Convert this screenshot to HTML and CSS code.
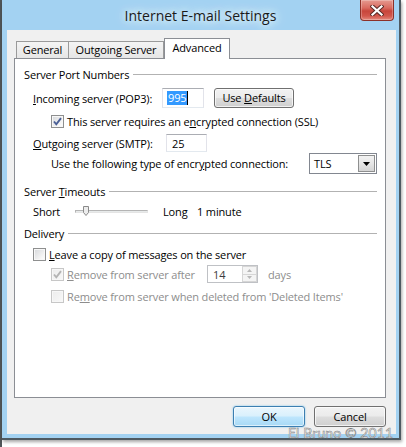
FILE: index.html
```html
<!DOCTYPE html>
<html>
<head>
<meta charset="utf-8">
<link rel="stylesheet" href="styles.css">
</head>
<body>
<div class="window">
  <div class="titlebar">
    <div class="tb-side"></div>
    <div class="title">Internet E-mail Settings</div>
    <div class="tb-side tb-right">
      <div class="close">
        <svg width="14" height="11" viewBox="0 0 14 11">
          <path d="M2.5 1.5 L11.5 9.5 M11.5 1.5 L2.5 9.5" stroke="#5a2a26" stroke-width="4.2" stroke-linecap="square" fill="none"/>
          <path d="M2.5 1.5 L11.5 9.5 M11.5 1.5 L2.5 9.5" stroke="#ffffff" stroke-width="2.2" stroke-linecap="square" fill="none"/>
        </svg>
      </div>
    </div>
  </div>
  <div class="client">
    <div class="tabs">
      <div class="tab tab-general">General</div>
      <div class="tab tab-outgoing">Outgoing Server</div>
      <div class="tab tab-advanced">Advanced</div>
    </div>
    <div class="panel">
      <div class="group-head gh-first"><span>Server Port Numbers</span><i class="rule"></i></div>

      <div class="row row-in">
        <span class="lbl lbl-in"><u>I</u>ncoming server (POP3):</span>
        <span class="textbox tb-in"><span class="sel">995</span><span class="caret"></span></span>
        <span class="btn btn-def"><span>Use <u>D</u>efaults</span></span>
      </div>

      <div class="row row-ssl">
        <span class="check checked">
          <svg width="11" height="11" viewBox="0 0 11 11"><path d="M2 5.5 L4.3 8.3 L9 2.2" stroke="#4a5f96" stroke-width="1.9" fill="none"/></svg>
        </span>
        <span class="clabel">This server requires an e<u>n</u>crypted connection (SSL)</span>
      </div>

      <div class="row row-out">
        <span class="lbl lbl-out"><u>O</u>utgoing server (SMTP):</span>
        <span class="textbox tb-out">25</span>
      </div>

      <div class="row row-enc">
        <span class="lbl lbl-enc">Use the following type of encr<u>y</u>pted connection:</span>
        <span class="select">
          <span class="sel-text">TLS</span>
          <span class="sel-btn"><svg width="7" height="4" viewBox="0 0 7 4"><path d="M0 0 H7 L3.5 4 Z" fill="#000"/></svg></span>
        </span>
      </div>

      <div class="group-head gh-timeouts"><span>Server <u>T</u>imeouts</span><i class="rule"></i></div>

      <div class="row row-slider">
        <span class="lbl lbl-short">Short</span>
        <span class="slider">
          <span class="track"></span>
          <svg class="thumb" width="6" height="10" viewBox="0 0 6 10"><path d="M0.5 0.5 H5.5 V6.5 L3 9.5 L0.5 6.5 Z" fill="#ececec" stroke="#8a8a8a"/></svg>
        </span>
        <span class="lbl lbl-long">Long</span>
        <span class="lbl">1 minute</span>
      </div>

      <div class="group-head gh-delivery"><span>Delivery</span><i class="rule"></i></div>

      <div class="row row-leave">
        <span class="check"></span>
        <span class="clabel"><u>L</u>eave a copy of messages on the server</span>
      </div>

      <div class="row row-after">
        <span class="check checked disabled">
          <svg width="11" height="11" viewBox="0 0 11 11"><path d="M2 5.5 L4.3 8.3 L9 2.2" stroke="#b4b4b4" stroke-width="1.9" fill="none"/></svg>
        </span>
        <span class="clabel dis lbl-after"><u>R</u>emove from server after</span>
        <span class="spin">
          <span class="spin-text">14</span>
          <span class="spin-btns">
            <span class="spin-b"><svg width="5" height="3" viewBox="0 0 5 3"><path d="M0 3 H5 L2.5 0 Z" fill="#b8b8b8"/></svg></span>
            <span class="spin-b"><svg width="5" height="3" viewBox="0 0 5 3"><path d="M0 0 H5 L2.5 3 Z" fill="#b8b8b8"/></svg></span>
          </span>
        </span>
        <span class="dis days">days</span>
      </div>

      <div class="row row-deleted">
        <span class="check disabled"></span>
        <span class="clabel dis">Re<u>m</u>ove from server when deleted from 'Deleted Items'</span>
      </div>
    </div>
    <div class="buttons">
      <span class="btn btn-ok">OK</span>
      <span class="btn btn-cancel">Cancel</span>
    </div>
  </div>
</div>
<div class="watermark">El Bruno © 2011</div>
</body>
</html>
```
FILE: styles.css
```css
html, body {
  margin: 0;
  padding: 0;
}
body {
  width: 406px;
  height: 447px;
  overflow: hidden;
  position: relative;
  background: linear-gradient(to right, #505558 0 2px, #ffffff 2px);
  font-family: "Open Sans", "Noto Sans", sans-serif;
  font-size: 11px;
  letter-spacing: -0.15px;
  color: #000;
}
u { text-decoration: underline; text-underline-offset: 1px; }

.window {
  margin-left: 2px;
  width: 397px;
  height: 438px;
  background: #a3d2f2;
  border-right: 2px solid #4e5a62;
  border-bottom: 2px solid #4e5a62;
  box-shadow: 1px 2px 3px rgba(0,0,0,0.35);
  display: flex;
  flex-direction: column;
}

.titlebar {
  height: 30px;
  display: grid;
  grid-template-columns: 1fr auto 1fr;
  align-items: start;
}
.title {
  font-size: 14px;
  letter-spacing: 0;
  color: #1a1a1a;
  line-height: 16px;
  padding-top: 8px;
  text-shadow: 0 0 6px #e6f4fd, 0 0 10px #e6f4fd, 0 0 14px #d8eefc;
}
.tb-right {
  display: flex;
  justify-content: flex-end;
  padding-right: 5px;
}
.close {
  width: 32px;
  height: 20px;
  border: 1px solid #8c3129;
  border-top: none;
  border-radius: 0 0 4px 4px;
  background: linear-gradient(to bottom, #e59a90 0%, #d96a5f 40%, #c8453b 55%, #d2574c 80%, #e48a7e 100%);
  box-shadow: inset 0 0 0 1px rgba(255,255,255,0.25);
  display: flex;
  align-items: center;
  justify-content: center;
}

.client {
  margin: 0 3px 4px 5px;
  height: 404px;
  background: #f0f0f0;
  padding: 8px 10px 7px 7px;
  box-sizing: border-box;
  display: flex;
  flex-direction: column;
}

.tabs {
  height: 20px;
  margin-left: 2px;
  display: flex;
  align-items: flex-end;
}
.tab {
  box-sizing: border-box;
  height: 17px;
  border: 1px solid #9a9a9a;
  border-bottom: none;
  background: linear-gradient(to bottom, #f4f4f4, #e6e6e6);
  display: flex;
  align-items: center;
  justify-content: center;
  line-height: 14px;
}
.tab-general { width: 53px; }
.tab-outgoing { width: 95px; border-left: none; }
.tab-advanced {
  width: 66px;
  height: 21px;
  margin-bottom: -1px;
  background: #fff;
  border-color: #8b8e94;
  z-index: 2;
  align-items: flex-start;
  padding-top: 2px;
}

.panel {
  box-sizing: border-box;
  width: 372px;
  height: 340px;
  background: #fff;
  border: 1px solid #8b8e94;
  padding: 7px 8px 0 9px;
  display: flex;
  flex-direction: column;
}

.group-head {
  height: 16px;
  display: flex;
  align-items: center;
}
.group-head .rule {
  flex: 1;
  height: 1px;
  background: #b2b2b2;
  margin-left: 4px;
}
.gh-timeouts { margin-top: 9px; }
.gh-delivery { margin-top: 6px; }

.row {
  display: flex;
  align-items: center;
  padding-left: 9px;
}
.row-in { height: 20px; margin-top: 6px; }
.row-ssl { height: 16px; margin-top: 5px; padding-left: 27px; }
.row-out { height: 18px; margin-top: 5px; }
.row-enc { height: 21px; margin-top: 1px; padding-left: 27px; }
.row-slider { height: 16px; margin-top: 4px; }
.row-leave { height: 16px; margin-top: 5px; }
.row-after { height: 18px; margin-top: 3px; padding-left: 27px; }
.row-deleted { height: 16px; margin-top: 5px; padding-left: 27px; }

.lbl { white-space: nowrap; }
.lbl-in { width: 129px; }
.lbl-out { width: 133px; }
.lbl-enc { width: 258px; }
.lbl-short { width: 42px; }
.lbl-long { width: 34px; margin-left: 15px; }

.textbox {
  box-sizing: border-box;
  height: 20px;
  width: 42px;
  border: 1px solid #e2e3ea;
  border-top-color: #abadb3;
  border-bottom-color: #e3e9ef;
  background: #fff;
  display: flex;
  align-items: center;
  padding-left: 4px;
}
.tb-in { width: 42px; }
.tb-out { width: 41px; height: 18px; padding-left: 5px; }
.sel {
  background: #3399ff;
  color: #fff;
  padding: 0 1px;
  line-height: 14px;
}
.caret {
  width: 1px;
  height: 14px;
  background: #000;
}

.btn {
  box-sizing: border-box;
  height: 21px;
  border: 1px solid #707070;
  border-radius: 3px;
  background: linear-gradient(to bottom, #f2f2f2 0%, #ebebeb 48%, #dddddd 52%, #cfcfcf 100%);
  box-shadow: inset 0 0 0 1px rgba(255,255,255,0.7);
  display: flex;
  align-items: center;
  justify-content: center;
  white-space: nowrap;
  line-height: 14px;
}
.btn-def { width: 80px; margin-left: 10px; height: 20px; }
.buttons {
  margin-top: 8px;
  display: flex;
  justify-content: flex-end;
  gap: 9px;
}
.btn-ok, .btn-cancel { width: 72px; }
.btn-ok {
  border-color: #3c7fb1;
  background: linear-gradient(to bottom, #eaf6fd 0%, #d9f0fc 48%, #bee6fd 52%, #a7d9f5 100%);
  box-shadow: inset 0 0 0 1px rgba(255,255,255,0.6), 0 0 2px #74c0ec;
}

.check {
  box-sizing: border-box;
  width: 13px;
  height: 13px;
  border: 1px solid #8e8f8f;
  background: linear-gradient(135deg, #d6d8db 0%, #f4f4f4 70%, #ffffff 100%);
  box-shadow: inset 0 0 0 1px #f7f7f7;
  display: flex;
  align-items: center;
  justify-content: center;
  flex: none;
}
.check.disabled {
  border-color: #c7c7c7;
  background: linear-gradient(135deg, #ececec 0%, #f8f8f8 100%);
}
.clabel { margin-left: 3px; white-space: nowrap; }
.dis { color: #8d8d8d; }
.lbl-after { width: 140px; }

.select {
  box-sizing: border-box;
  width: 68px;
  height: 21px;
  border: 1px solid #828790;
  background: #fff;
  display: flex;
  align-items: center;
  padding: 0 1px 0 4px;
}
.sel-text { flex: 1; }
.sel-btn {
  box-sizing: border-box;
  width: 17px;
  height: 17px;
  border: 1px solid #8e8f8f;
  background: linear-gradient(to bottom, #f2f2f2 0%, #e6e6e6 50%, #d4d4d4 100%);
  display: flex;
  align-items: center;
  justify-content: center;
}

.slider {
  width: 73px;
  height: 16px;
  position: relative;
  display: flex;
  align-items: center;
}
.track {
  width: 73px;
  height: 3px;
  box-sizing: border-box;
  border: 1px solid #b4b4b4;
  border-bottom-color: #e4e4e4;
  border-right-color: #e4e4e4;
  background: #e7eaea;
}
.thumb {
  position: absolute;
  left: 8px;
  top: 3px;
}

.spin {
  box-sizing: border-box;
  width: 51px;
  height: 18px;
  border: 1px solid #bfc1c5;
  background: #fff;
  display: flex;
  align-items: center;
  padding-left: 5px;
}
.spin-text { flex: 1; color: #3c3c3c; }
.spin-btns {
  width: 15px;
  height: 16px;
  display: flex;
  flex-direction: column;
}
.spin-b {
  flex: 1;
  box-sizing: border-box;
  border: 1px solid #d6d6d6;
  background: #f4f4f4;
  display: flex;
  align-items: center;
  justify-content: center;
}
.spin-b + .spin-b { border-top: none; }
.days { margin-left: 10px; }

.watermark {
  position: absolute;
  left: 288px;
  top: 427px;
  font-family: Lato, "Open Sans", sans-serif;
  font-size: 14px;
  letter-spacing: 0.1px;
  color: #f4f4f4;
  -webkit-text-stroke: 0.5px #7c7c7c;
  line-height: 11px;
  white-space: nowrap;
}
```
